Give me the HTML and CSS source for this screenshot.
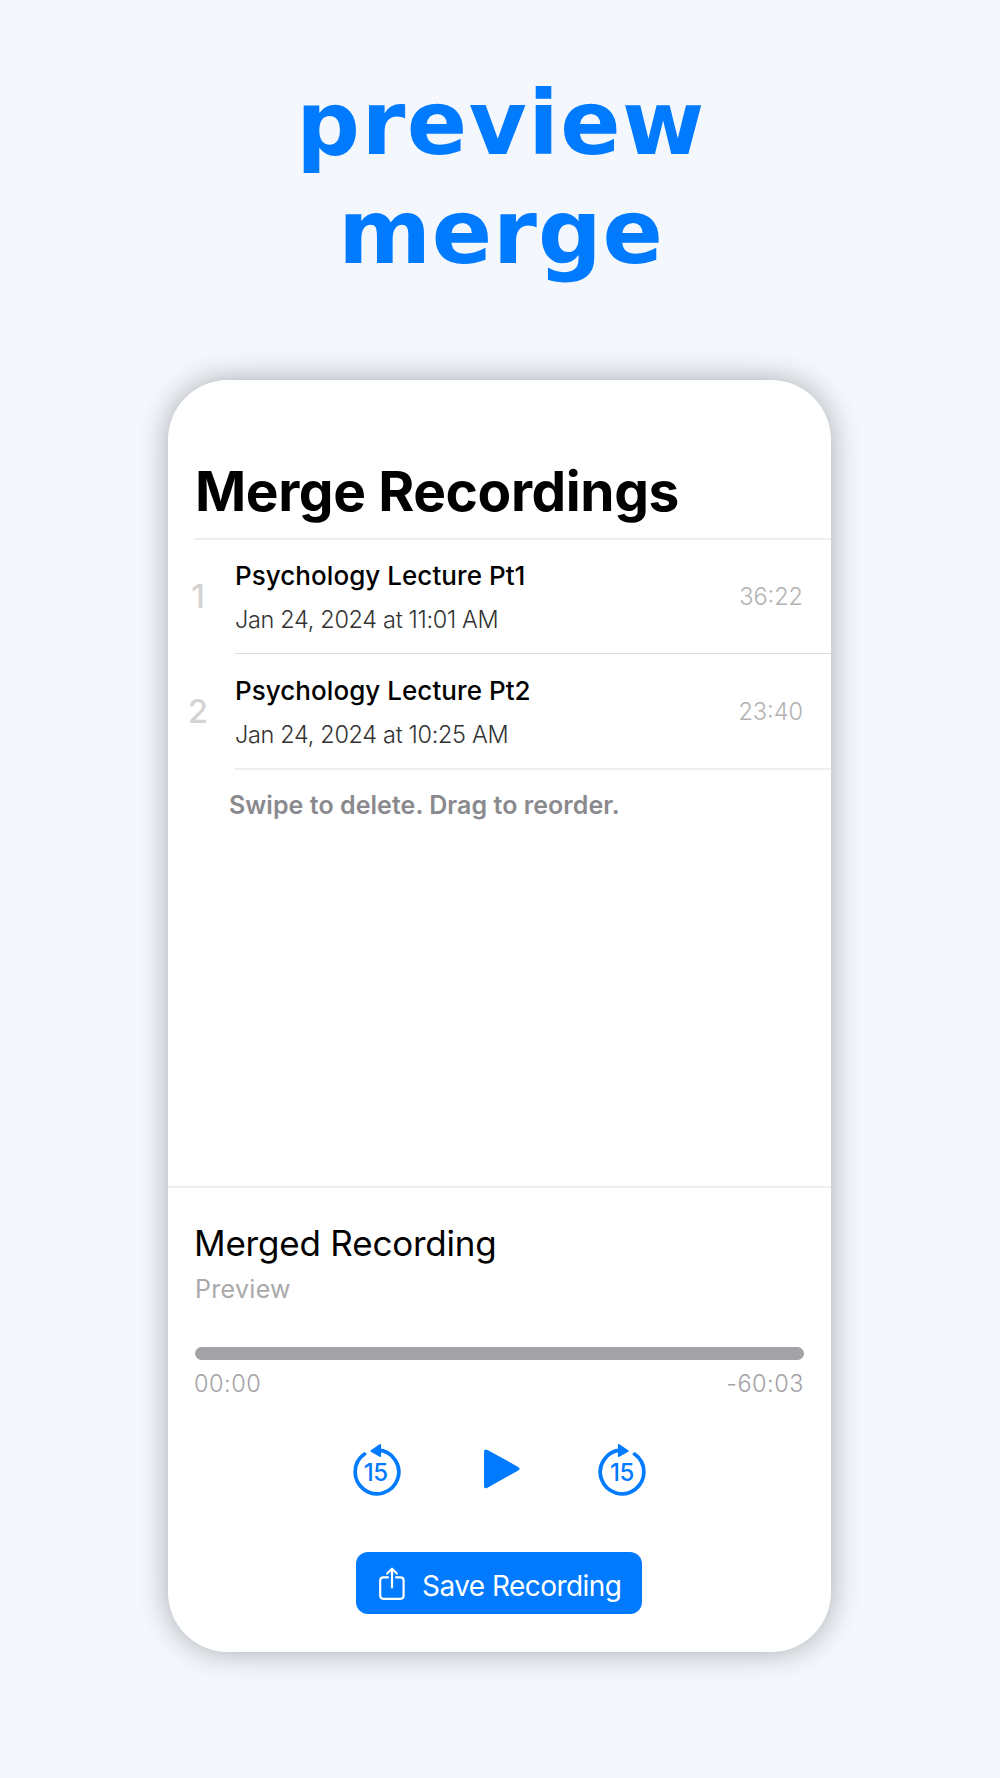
FILE: index.html
```html
<!DOCTYPE html>
<html lang="en">
<head>
  <meta charset="UTF-8" />
  <meta name="viewport" content="width=device-width, initial-scale=1.0"/>
  <title>Merge Recordings</title>
  <link rel="stylesheet" href="styles.css">
</head>
<body>

  <h1 class="headline"><span class="wide">preview</span><br>merge</h1>

  <div class="phone">
    <h2 class="title">Merge Recordings</h2>

    <ul class="recordings">
      <li class="recording first">
        <span class="number">1</span>
        <div class="details">
          <div class="info">
            <span class="name">Psychology Lecture Pt1</span>
            <span class="date">Jan 24, 2024 at 11:01 AM</span>
          </div>
          <span class="length">36:22</span>
        </div>
      </li>
      <li class="recording last">
        <span class="number">2</span>
        <div class="details">
          <div class="info">
            <span class="name">Psychology Lecture Pt2</span>
            <span class="date">Jan 24, 2024 at 10:25 AM</span>
          </div>
          <span class="length">23:40</span>
        </div>
      </li>
    </ul>
    <p class="hint">Swipe to delete. Drag to reorder.</p>

    <div class="player">
      <h3 class="merged">Merged Recording</h3>
      <p class="subtitle">Preview</p>
      <div class="bar"></div>
      <div class="times">
        <span>00:00</span>
        <span>-60:03</span>
      </div>

      <div class="controls">
        <svg class="skip" viewBox="0 0 50 54" role="img" aria-label="Back 15 seconds">
          <path d="M13.5 12.1A21.8 21.8 0 1 0 27 8.2" fill="none" stroke="currentColor" stroke-width="3.7" stroke-linecap="round"/>
          <path d="M19.8 8.2L28.6 2.2Q30.1 1.4 30.1 3.1V14Q30.1 15.7 28.6 14.8L19.8 9.8Q18.7 9 19.8 8.2Z" fill="currentColor"/>
          <text x="24.8" y="39.2" text-anchor="middle" fill="currentColor">15</text>
        </svg>
        <svg class="play" viewBox="0 0 36 40" role="img" aria-label="Play">
          <path d="M0 2.8Q0 -.7 3.5 .9L34.2 17.9Q37 19.7 34.2 21.5L3.5 38.8Q0 40.4 0 37Z" fill="currentColor"/>
        </svg>
        <svg class="skip" viewBox="0 0 50 54" role="img" aria-label="Forward 15 seconds">
          <path d="M36.5 12.1A21.8 21.8 0 1 1 23 8.2" fill="none" stroke="currentColor" stroke-width="3.7" stroke-linecap="round"/>
          <path d="M30.2 8.2L21.4 2.2Q19.9 1.4 19.9 3.1V14Q19.9 15.7 21.4 14.8L30.2 9.8Q31.3 9 30.2 8.2Z" fill="currentColor"/>
          <text x="24" y="39.2" text-anchor="middle" fill="currentColor">15</text>
        </svg>
      </div>

      <button class="save" type="button">
        <svg class="share" viewBox="0 0 26 34" fill="none" stroke="currentColor" stroke-width="2.2" stroke-linecap="round" stroke-linejoin="round">
          <path d="M9 10.3H4.5Q1.2 10.3 1.2 13.5V28.5Q1.2 31.8 4.5 31.8H21.3Q24.6 31.8 24.6 28.5V13.5Q24.6 10.3 21.3 10.3H17"/>
          <path d="M13 20.5V2M8.2 6.5L13 1.7L17.8 6.5"/>
        </svg>
        <span class="label">Save Recording</span>
      </button>
    </div>
  </div>

</body>
</html>
```

FILE: styles.css
```css
* {
  box-sizing: border-box;
}

body {
  margin: 0;
  height: 1778px;
  background: #f4f8fd;
  font-family: Inter, sans-serif;
  overflow: hidden;
}

h1, h2, h3, p, ul {
  margin: 0;
  padding: 0;
}

.headline {
  padding: 69px 0 0 2px;
  text-align: center;
  color: #007aff;
  font: bold 89px/109px "DejaVu Sans", sans-serif;
  letter-spacing: 0.9px;
}

.wide {
  letter-spacing: 1.5px;
}

.phone {
  display: flex;
  flex-direction: column;
  width: 663px;
  height: 1272px;
  margin: 93px 0 0 168px;
  padding-top: 76px;
  background: #fff;
  border-radius: 60px;
  box-shadow: 0 0 30px rgba(0, 0, 0, 0.32);
}

.title {
  height: 84px;
  margin-left: 27px;
  border-bottom: 2px solid #eee;
  font-size: 55px;
  font-weight: 700;
  line-height: 70px;
  letter-spacing: -0.4px;
  white-space: nowrap;
}

.recordings {
  list-style: none;
}

.recording {
  display: flex;
}

.number {
  width: 67px;
  padding-right: 7px;
  text-align: center;
  color: #d3d3d3;
  font-size: 33px;
  font-weight: 450;
  line-height: 113px;
}

.details {
  display: flex;
  flex: 1;
  justify-content: space-between;
  padding-right: 28px;
}

.first .details {
  height: 114px;
  border-bottom: 1px solid #dcdcdc;
}

.last {
  padding-top: 1px;
}

.last .details {
  height: 115px;
  border-bottom: 2px solid #eee;
}

.info {
  display: flex;
  flex-direction: column;
  padding-top: 14px;
  white-space: nowrap;
}

.name {
  font-size: 26px;
  font-weight: 500;
  line-height: 44px;
  letter-spacing: 0.05px;
}

.date {
  color: #333;
  font-size: 23.5px;
  font-weight: 300;
  line-height: 44px;
  letter-spacing: -0.33px;
}

.length {
  color: #b2b2b2;
  font-size: 23.5px;
  font-weight: 300;
  line-height: 114px;
}

.hint {
  margin-left: 61px;
  color: #8a8a8e;
  font-size: 25px;
  font-weight: 600;
  line-height: 70px;
  letter-spacing: 0.05px;
}

.player {
  display: flex;
  flex-direction: column;
  height: 466px;
  margin-top: auto;
  padding: 31px 27px 0;
  border-top: 2px solid #eee;
}

.merged {
  margin-left: -1px;
  font-size: 35px;
  font-weight: 420;
  line-height: 49px;
  letter-spacing: -0.2px;
}

.subtitle {
  color: #aaa;
  font-size: 25px;
  font-weight: 420;
  line-height: 43px;
  letter-spacing: 0.3px;
}

.bar {
  height: 13px;
  margin-top: 36px;
  background: #a3a2a7;
  border-radius: 7px;
}

.times {
  display: flex;
  justify-content: space-between;
  margin-left: -1px;
  color: #a3a3a7;
  font-size: 23.5px;
  font-weight: 300;
  line-height: 48px;
  letter-spacing: 0.5px;
}

.controls {
  display: flex;
  justify-content: space-between;
  align-items: center;
  width: 296px;
  height: 54px;
  margin: 34px auto 0;
  color: #007aff;
}

.skip {
  width: 50px;
  height: 54px;
}

.skip:first-child {
  margin-left: -1px;
}

.skip text {
  font: 500 24px Inter, sans-serif;
  letter-spacing: -0.4px;
}

.play {
  width: 36px;
  height: 40px;
  margin-left: 6px;
}

.save {
  display: flex;
  align-items: center;
  width: 286px;
  height: 62px;
  margin: 56px 0 0 161px;
  padding: 1px 0 0 23px;
  gap: 17px;
  border: 0;
  border-radius: 12px;
  background: #007aff;
  color: #fff;
  font: 400 28px Inter, sans-serif;
  white-space: nowrap;
}

.label {
  padding-top: 4px;
  letter-spacing: -0.55px;
}

.share {
  flex: none;
  width: 26px;
  height: 34px;
}
```
